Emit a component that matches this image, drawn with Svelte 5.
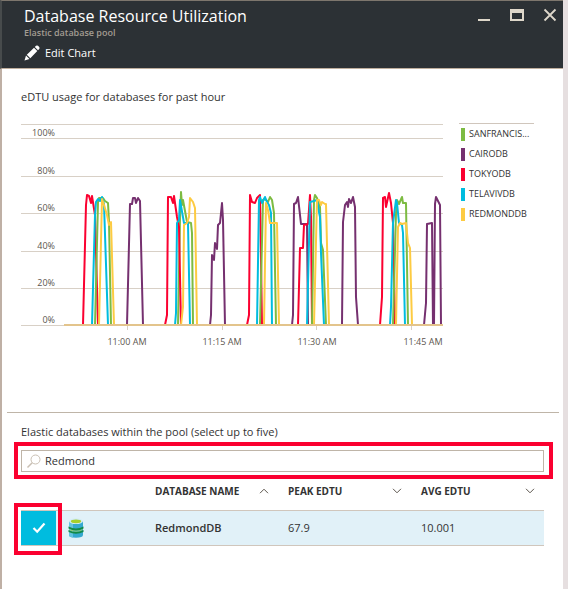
<script>
  const colors = {
    green: '#7dbb42',
    purple: '#75306f',
    red: '#fb0030',
    blue: '#00bcdf',
    yellow: '#fdcb42'
  };

  const legend = [
    { name: 'SANFRANCIS...', color: colors.green },
    { name: 'CAIRODB', color: colors.purple },
    { name: 'TOKYODB', color: colors.red },
    { name: 'TELAVIVDB', color: colors.blue },
    { name: 'REDMONDDB', color: colors.yellow }
  ];

  const gridLines = [
    { y: 138, label: '100%' },
    { y: 176, label: '80%' },
    { y: 213, label: '60%' },
    { y: 251, label: '40%' },
    { y: 288, label: '20%' },
    { y: 325, label: '0%' }
  ];

  const ticks = [
    { x: 127, at: 127, label: '11:00 AM' },
    { x: 222, at: 222, label: '11:15 AM' },
    { x: 316, at: 317, label: '11:30 AM' },
    { x: 411, at: 423, label: '11:45 AM' }
  ];

  const series = [
    { color: colors.red, points: '83,325 86,205 87,195 89,196 91,203 92,196 95,215 98,325' },
    { color: colors.green, points: '95,325 98,202 99,198 103,198 105,201 108,203 109,222 111,325' },
    { color: colors.blue, points: '92,325 95,215 96,202 98,199 100,201 102,197 104,204 108,325' },
    { color: colors.yellow, points: '99,325 102,199 104,205 107,215 109,225 111,222 114,325' },
    { color: colors.purple, points: '127,325 130,204 132,204 133,198 135,198 136,203 138,198 140,201 143,325' },
    { color: colors.green, points: '178,325 180,220 181,192 182,205 183,200 187,222 191,223 192,233 193,325' },
    { color: colors.red, points: '165,325 167,315 168,197 171,197 173,203 174,196 177,217 179,227 181,325' },
    { color: colors.blue, points: '175,325 176,313 177,223 179,220 180,200 184,223 188,223 190,325' },
    { color: colors.yellow, points: '181,325 183,307 184,225 187,223 189,217 190,198 193,202 195,208 197,325' },
    { color: colors.purple, points: '210,325 211,315 212,255 214,260 215,243 217,249 218,225 220,223 222,203 223,220 225,325' },
    { color: colors.red, points: '247,325 249,315 250,195 252,202 255,203 257,198 260,195 262,325' },
    { color: colors.green, points: '260,325 263,200 265,199 268,202 270,197 272,200 274,213 276,325' },
    { color: colors.blue, points: '257,325 259,200 260,197 262,203 265,197 267,202 269,205 271,213 272,325' },
    { color: colors.yellow, points: '264,325 266,203 268,210 270,223 277,223 279,325' },
    { color: colors.purple, points: '292,325 293,315 294,204 296,203 298,197 301,224 307,224 308,325' },
    { color: colors.red, points: '298,325 300,248 303,248 304,225 308,224 310,195 311,217 312,325' },
    { color: colors.green, points: '312,325 314,200 315,195 317,198 320,207 321,243 323,250 326,325' },
    { color: colors.blue, points: '307,325 310,202 314,201 317,200 319,212 320,217 321,253 324,325' },
    { color: colors.yellow, points: '314,325 317,200 319,200 321,205 322,202 325,204 326,204 329,325' },
    { color: colors.purple, points: '342,325 343,222 345,205 347,202 348,207 349,199 351,203 353,197 355,207 356,297 358,325' },
    { color: colors.red, points: '380,325 382,297 383,198 385,197 386,207 389,193 391,203 393,223 395,325' },
    { color: colors.green, points: '393,325 396,213 397,200 399,204 402,197 403,203 406,203 408,325' },
    { color: colors.blue, points: '390,325 391,307 393,223 396,200 397,203 399,223 402,225 403,233 405,325' },
    { color: colors.yellow, points: '396,325 398,227 400,223 402,224 406,223 408,243 410,248 412,325' },
    { color: colors.purple, points: '424,325 426,303 427,224 432,223 433,325 434,325 435,204 436,197 440,205 441,325' }
  ];

  let search = $state('Redmond');
  let picked = $state(true);
</script>

<main class="blade">
  <header>
    <div class="titles">
      <h1>Database Resource Utilization</h1>
      <p>Elastic database pool</p>
      <button class="edit" type="button">
        <svg width="16" height="16" viewBox="0 0 16 16" aria-hidden="true">
          <path d="M0.5 15.5 L2 10.5 L5.5 14 Z M2.8 9.7 L10 2.7 L13.3 6 L6.3 13.2 Z M10.8 2 L12 0.8 Q13 0 14 0.8 L15.2 2 Q16 3 15.2 4 L14 5.2 Z" fill="#fff" />
        </svg>
        <span>Edit Chart</span>
      </button>
    </div>
    <div class="window-buttons">
      <button type="button" aria-label="Minimize">
        <svg width="14" height="14" viewBox="0 0 14 14"><path d="M1 11h12v2H1z" fill="#ded7ca" /></svg>
      </button>
      <button type="button" aria-label="Maximize">
        <svg width="14" height="14" viewBox="0 0 14 14"><path d="M0 1h14v12H0z M2 5v6h10V5z" fill="#ded7ca" fill-rule="evenodd" /></svg>
      </button>
      <button type="button" aria-label="Close">
        <svg width="14" height="14" viewBox="0 0 14 14"><path d="M1.5 1.5 L12.5 12.5 M12.5 1.5 L1.5 12.5" stroke="#ded7ca" stroke-width="1.8" /></svg>
      </button>
    </div>
  </header>

  <section class="usage">
    <h2>eDTU usage for databases for past hour</h2>
    <div class="chart-row">
      <svg class="chart" viewBox="21 123 422 226" role="img" aria-label="eDTU usage for databases for past hour">
        <path d="M21 124.5H443" class="grid" />
        {#each gridLines as line}
          <path d="M21 {line.y + 0.5}H443" class="grid" />
          <text x="55" y={line.y - 2} text-anchor="end">{line.label}</text>
        {/each}
        {#each ticks as tick}
          <path d="M{tick.x + 0.5} 326V330" class="grid" />
          <text x={tick.at} y="345" text-anchor="middle">{tick.label}</text>
        {/each}
        {#each series as s}
          <polyline points={s.points} stroke={s.color} />
        {/each}
        <path d="M64 325H443" class="base" />
      </svg>
      <ul class="legend">
        {#each legend as item}
          <li><i style="background: {item.color}"></i>{item.name}</li>
        {/each}
      </ul>
    </div>
  </section>

  <section class="databases">
    <h2><label for="filter">Elastic databases within the pool (select up to five)</label></h2>
    <div class="callout">
      <div class="search">
        <svg width="16" height="16" viewBox="0 0 16 16" aria-hidden="true">
          <path d="M6.2 9.8 L1.5 14.5" stroke="#c9bfb3" stroke-width="1.5" fill="none" />
          <circle cx="9.5" cy="6.5" r="4.5" stroke="#c9bfb3" fill="none" />
        </svg>
        <input id="filter" type="text" bind:value={search} />
      </div>
    </div>
    <table>
      <colgroup>
        <col class="c-check" /><col class="c-icon" /><col class="c-data" /><col class="c-data" /><col />
      </colgroup>
      <thead>
        <tr>
          <th></th>
          <th></th>
          <th>
            <button type="button">DATABASE NAME
              <svg width="10" height="6" viewBox="0 0 10 6"><path d="M1 5.2L5 1.2L9 5.2" /></svg>
            </button>
          </th>
          <th>
            <button type="button">PEAK EDTU
              <svg width="10" height="6" viewBox="0 0 10 6"><path d="M1 0.8L5 4.8L9 0.8" /></svg>
            </button>
          </th>
          <th>
            <button type="button">AVG EDTU
              <svg width="10" height="6" viewBox="0 0 10 6"><path d="M1 0.8L5 4.8L9 0.8" /></svg>
            </button>
          </th>
        </tr>
      </thead>
      <tbody>
        <tr>
          <td class="check">
            <label>
              <input type="checkbox" bind:checked={picked} aria-label="Select RedmondDB" />
              {#if picked}
                <svg width="14" height="12" viewBox="0 0 14 12" aria-hidden="true"><path d="M1.5 6L5.2 9.7L12.5 1.5" fill="none" stroke="#fff" stroke-width="2.2" /></svg>
              {/if}
            </label>
          </td>
          <td class="icon">
            <svg width="16" height="20" viewBox="0 0 16 20" aria-hidden="true">
              <path d="M1 3V17Q1 19.8 8 19.8T15 17V3Z" fill="#35a9cf" />
              <path d="M1 3V17Q1 19.2 5 19.6V3Z" fill="#63c3de" />
              <ellipse cx="8" cy="3.2" rx="7" ry="2.9" fill="#d3edf5" />
              <ellipse cx="8" cy="3.3" rx="5.2" ry="1.9" fill="#a5cf2c" />
              <path d="M0.5 8.5Q8 12.5 15.5 8.5V10.5Q8 14.5 0.5 10.5Z M0.5 12Q8 16 15.5 12V14Q8 17.5 0.5 14Z" fill="#138a46" />
              <path d="M1.5 11.2Q8 14.5 14.5 11.2V12Q8 15 1.5 12Z" fill="#a3cf45" />
            </svg>
          </td>
          <td class="name">RedmondDB</td>
          <td>67.9</td>
          <td>10.001</td>
        </tr>
      </tbody>
    </table>
  </section>
</main>

<style>
  :global(body) {
    margin: 0;
    background: #e6dfe0;
  }
  .blade {
    box-sizing: border-box;
    min-height: 100vh;
    margin-right: 5px;
    border-left: 2px solid #bfb0a5;
    background: #fff;
    color: #333;
    font-family: 'Open Sans', 'Noto Sans', sans-serif;
    font-size: 11px;
    line-height: 16px;
  }
  button {
    padding: 0;
    border: 0;
    background: none;
    color: inherit;
    font: inherit;
  }
  svg {
    display: block;
  }
  header {
    display: flex;
    justify-content: space-between;
    margin-left: -2px;
    border-top: 1px solid #7d766d;
    border-bottom: 1px solid #bfae9d;
    border-left: 2px solid #474b4c;
    background: #2c3135;
    color: #fff;
  }
  .titles {
    padding: 4px 0 3px 22px;
  }
  h1 {
    margin: 0;
    font-size: 16px;
    font-weight: 400;
    line-height: 22px;
  }
  header p {
    margin: 0;
    color: #a39c92;
    font-size: 9px;
    font-weight: 600;
    line-height: 12px;
  }
  .edit {
    display: flex;
    gap: 5px;
    align-items: center;
    height: 24px;
    margin-top: 2px;
  }
  .window-buttons {
    display: flex;
    gap: 19px;
    align-items: flex-start;
    padding: 7px 6px 0 0;
  }
  h2 {
    margin: 0;
    font-size: 11px;
    font-weight: 400;
    line-height: 16px;
  }
  .usage {
    padding: 20px 29px 0 19px;
  }
  .chart-row {
    display: flex;
    gap: 16px;
    align-items: flex-start;
    padding-top: 18px;
  }
  .chart {
    flex: 1;
    min-width: 0;
  }
  .chart text {
    fill: #5c564e;
    font-size: 9px;
  }
  .grid {
    stroke: #d8d0c6;
  }
  .base {
    stroke: #e3c48c;
    stroke-width: 2;
  }
  polyline {
    fill: none;
    stroke-width: 2;
    stroke-linejoin: round;
  }
  .legend {
    width: 75px;
    margin: 0;
    padding: 0;
    border-top: 1px solid #d0c6bc;
    list-style: none;
    font-size: 9px;
    line-height: 20px;
  }
  .legend li {
    display: flex;
    gap: 4px;
    align-items: center;
    padding-left: 2px;
    white-space: nowrap;
  }
  .legend i {
    flex: none;
    width: 4px;
    height: 13px;
  }
  .databases {
    margin: 63px 4px 0 5px;
    padding: 11px 6px 0 7px;
    border-top: 1px solid #bfb5a8;
  }
  .databases h2 {
    padding-left: 7px;
  }
  .callout {
    margin-top: 2px;
    padding: 4px 5px 3px 3px;
    border: 4px solid #fb0030;
  }
  .search {
    display: flex;
    gap: 3px;
    align-items: center;
    height: 20px;
    padding-left: 4px;
    border: 1px solid #bfb5a8;
  }
  .search input {
    flex: 1;
    min-width: 0;
    padding: 0;
    border: 0;
    outline: 0;
    background: none;
    color: #333;
    font: inherit;
  }
  table {
    width: calc(100% - 16px);
    margin-left: 7px;
    border-collapse: separate;
    border-spacing: 0;
    table-layout: fixed;
  }
  .c-check {
    width: 35px;
  }
  .c-icon {
    width: 99px;
  }
  .c-data {
    width: 133px;
  }
  th {
    height: 32px;
    padding: 0 9px 11px 0;
    border-bottom: 1px solid #d0c6bc;
    font-size: 10px;
    font-weight: 700;
    text-align: left;
    line-height: 16px;
    vertical-align: bottom;
    box-sizing: border-box;
  }
  th button {
    display: flex;
    align-items: center;
    justify-content: space-between;
    width: 100%;
    padding-right: 10px;
    box-sizing: border-box;
  }
  th:last-child button {
    padding-right: 0;
  }
  th path {
    fill: none;
    stroke: #5c564e;
  }
  td {
    height: 34px;
    padding: 0;
    border-bottom: 1px solid #d0c6bc;
    background: #e1f1f8;
  }
  .name {
    font-weight: 600;
  }
  .icon svg {
    margin-left: 12px;
  }
  .check {
    position: relative;
  }
  .check label {
    display: flex;
    align-items: center;
    justify-content: center;
    height: 34px;
    background: #00bcdf;
  }
  .check::after {
    content: '';
    position: absolute;
    inset: -8px -6px -10px -7px;
    border: 4px solid #fb0030;
    pointer-events: none;
  }
  .check input {
    position: absolute;
    inset: 0;
    margin: 0;
    appearance: none;
  }
</style>
